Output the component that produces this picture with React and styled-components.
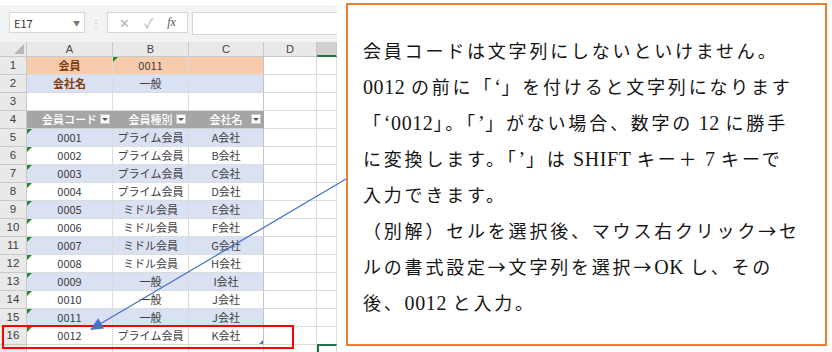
import React from 'react'
import styled, { createGlobalStyle, css } from 'styled-components'

const GlobalStyle = createGlobalStyle`
  html, body {
    margin: 0;
    padding: 0;
    background: #ffffff;
  }
  body {
    width: 832px;
    height: 352px;
    overflow: hidden;
  }
`

const Page = styled.div`
  position: relative;
  display: flex;
  align-items: flex-start;
  width: 832px;
  height: 352px;
  overflow: hidden;
  background: #fff;
`

const Sheet = styled.div`
  width: 337px;
  height: 352px;
  flex-shrink: 0;
  display: flex;
  flex-direction: column;
  overflow: hidden;
  font-family: "Noto Sans CJK JP", sans-serif;
  font-size: 11px;
  color: #3a3a3a;
`

const FormulaBar = styled.div`
  flex-shrink: 0;
  display: flex;
  align-items: flex-start;
  margin-top: 5px;
  height: 37px;
  padding-top: 7px;
  box-sizing: border-box;
  background: #f3f3f3;
`

const NameBox = styled.div`
  display: flex;
  align-items: center;
  justify-content: space-between;
  margin-left: 9px;
  width: 76px;
  height: 21px;
  box-sizing: border-box;
  padding: 0 4px 0 4px;
  background: #fff;
  border: 1px solid #d6d6d6;
  color: #333;
`

const Caret = styled.span`
  font-size: 7px;
  color: #777;
`

const Grip = styled.div`
  width: 22px;
  height: 21px;
  display: flex;
  align-items: center;
  justify-content: center;
  color: #b5b5b5;
  font-size: 10px;
`

const FuncBox = styled.div`
  display: flex;
  align-items: center;
  justify-content: space-around;
  width: 81px;
  height: 21px;
  box-sizing: border-box;
  padding: 0 4px;
  background: #fff;
  border: 1px solid #d6d6d6;
  color: #b0b0b0;
  font-size: 13px;
`

const Fx = styled.span`
  font-family: "Liberation Serif", serif;
  font-style: italic;
  font-size: 12px;
  color: #555;
`

const Input = styled.div`
  flex: 1;
  margin-left: 4px;
  height: 21px;
  background: #fff;
  border: 1px solid #d6d6d6;
  border-right: none;
`

const Grid = styled.div`
  flex-shrink: 0;
  display: grid;
  grid-template-columns: 27px 86px 76px 75px 53px 20px;
  grid-template-rows: 15px repeat(17, 18px);
`

const Cell = styled.div`
  position: relative;
  display: flex;
  align-items: center;
  justify-content: center;
  box-sizing: border-box;
  border-right: 1px solid ${p => p.$edge ? '#c4c4c4' : '#dcdcdc'};
  border-bottom: 1px solid #dcdcdc;
  background: ${p => p.$bg || '#fff'};
  color: ${p => p.$color || '#404040'};
  font-weight: ${p => p.$bold ? 700 : 400};
  white-space: nowrap;
  line-height: 1;

  ${p => p.$tri && css`
    &::before {
      content: "";
      position: absolute;
      left: 0;
      top: 0;
      border-top: 5px solid #1f8a2e;
      border-right: 5px solid transparent;
    }
  `}

  ${p => p.$handle && css`
    &::after {
      content: "";
      position: absolute;
      right: 0;
      bottom: 0;
      border-bottom: 4px solid #4472c4;
      border-left: 4px solid transparent;
    }
  `}
`

const HeadCell = styled.div`
  display: flex;
  align-items: center;
  justify-content: center;
  box-sizing: border-box;
  background: ${p => p.$active ? '#d2d2d2' : '#e9e9e9'};
  border-right: 1px solid #c9c9c9;
  border-bottom: ${p => p.$active ? '2px solid #217346' : '1px solid #c9c9c9'};
  color: #444;
  font-family: "Liberation Sans", sans-serif;
  font-size: 11px;
  line-height: 1;
`

const Corner = styled(HeadCell)`
  position: relative;
  &::after {
    content: "";
    position: absolute;
    right: 2px;
    bottom: 2px;
    border-bottom: 10px solid #b9b9b9;
    border-left: 10px solid transparent;
  }
`

const RowNum = styled(HeadCell)`
  font-size: 11.5px;
  color: #3d3d3d;
`

const TableHead = styled(Cell)`
  background: #a5a5a5;
  color: #fff;
  border-right-color: #a5a5a5;
  border-bottom-color: #d0d0d0;
  font-weight: 500;
`

const FilterButton = styled.span`
  position: absolute;
  right: 2px;
  top: 3px;
  width: 10px;
  height: 10px;
  box-sizing: border-box;
  background: #fff;
  border: 1px solid #c8c8c8;
  display: flex;
  align-items: center;
  justify-content: center;
  &::after {
    content: "";
    border-top: 3px solid #555;
    border-left: 3px solid transparent;
    border-right: 3px solid transparent;
  }
`

const Selected = styled(Cell)`
  border-top: 2px solid #217346;
  border-left: 2px solid #217346;
  margin-top: -1px;
`

const Callout = styled.div`
  flex-shrink: 0;
  margin: 3px 0 0 9px;
  width: 481px;
  height: 343px;
  box-sizing: border-box;
  border: 2px solid #ed7d31;
  padding: 27px 0 0 15px;
  background: #fff;
  font-family: "Noto Sans CJK JP", sans-serif;
  font-size: 18px;
  letter-spacing: 2.8px;
  color: #151515;
`

const Line = styled.div`
  height: 36px;
  line-height: 36px;
  white-space: pre;
  overflow: visible;
`

const Latin = styled.span`
  font-family: "Liberation Serif", serif;
  font-size: 20px;
  line-height: 1;
  letter-spacing: 0.6px;
`

const Overlay = styled.svg`
  position: absolute;
  left: 0;
  top: 0;
  pointer-events: none;
`

const BROWN = '#843c0c'
const BLUE = '#d9e1f2'
const PEACH = '#f8cbad'

const members = [
  ['0001', 'プライム会員', 'A会社'],
  ['0002', 'プライム会員', 'B会社'],
  ['0003', 'プライム会員', 'C会社'],
  ['0004', 'プライム会員', 'D会社'],
  ['0005', 'ミドル会員', 'E会社'],
  ['0006', 'ミドル会員', 'F会社'],
  ['0007', 'ミドル会員', 'G会社'],
  ['0008', 'ミドル会員', 'H会社'],
  ['0009', '一般', 'I会社'],
  ['0010', '一般', 'J会社'],
  ['0011', '一般', 'J会社'],
  ['0012', 'プライム会員', 'K会社'],
]

const Blank = () => (
  <>
    <Cell />
    <Cell />
  </>
)

const App = () => {
  return (
    <Page>
      <GlobalStyle />
      <Sheet>
        <FormulaBar>
          <NameBox>
            <span>E17</span>
            <Caret>▼</Caret>
          </NameBox>
          <Grip>⋮</Grip>
          <FuncBox>
            <span>✕</span>
            <span>✓</span>
            <Fx>fx</Fx>
          </FuncBox>
          <Input />
        </FormulaBar>

        <Grid>
          <Corner />
          <HeadCell>A</HeadCell>
          <HeadCell>B</HeadCell>
          <HeadCell>C</HeadCell>
          <HeadCell>D</HeadCell>
          <HeadCell $active />

          <RowNum>1</RowNum>
          <Cell $bg={PEACH} $bold $color={BROWN}>会員</Cell>
          <Cell $bg={PEACH} $tri>0011</Cell>
          <Cell $bg={PEACH} $edge />
          <Blank />

          <RowNum>2</RowNum>
          <Cell $bg={BLUE} $bold $color={BROWN}>会社名</Cell>
          <Cell $bg={BLUE}>一般</Cell>
          <Cell $bg={BLUE} $edge />
          <Blank />

          <RowNum>3</RowNum>
          <Cell />
          <Cell />
          <Cell $edge />
          <Blank />

          <RowNum>4</RowNum>
          <TableHead>会員コード<FilterButton /></TableHead>
          <TableHead>会員種別<FilterButton /></TableHead>
          <TableHead>会社名<FilterButton /></TableHead>
          <Blank />

          {members.map(([code, kind, company], i) => {
            const bg = i % 2 === 0 ? BLUE : '#fff'
            const last = i === members.length - 1
            return (
              <React.Fragment key={code}>
                <RowNum>{i + 5}</RowNum>
                <Cell $bg={bg} $tri>{code}</Cell>
                <Cell $bg={bg}>{kind}</Cell>
                <Cell $bg={bg} $edge $handle={last}>{company}</Cell>
                <Blank />
              </React.Fragment>
            )
          })}

          <RowNum />
          <Cell />
          <Cell />
          <Cell />
          <Cell />
          <Selected />
        </Grid>
      </Sheet>

      <Callout>
        <Line>会員コードは文字列にしないといけません。</Line>
        <Line><Latin>0012 </Latin>の前に「<Latin>‘</Latin>」を付けると文字列になります</Line>
        <Line>「<Latin>‘0012</Latin>」。「<Latin>’</Latin>」がない場合、数字の<Latin> 12 </Latin>に勝手</Line>
        <Line>に変換します。「<Latin>’</Latin>」は<Latin> SHIFT </Latin>キー＋<Latin> 7 </Latin>キーで</Line>
        <Line>入力できます。</Line>
        <Line>（別解）セルを選択後、マウス右クリック→セ</Line>
        <Line>ルの書式設定→文字列を選択→<Latin>OK </Latin>し、その</Line>
        <Line>後、<Latin>0012 </Latin>と入力。</Line>
      </Callout>

      <Overlay width="832" height="352" viewBox="0 0 832 352">
        <rect x="3" y="326" width="290" height="22" fill="none" stroke="#ff0000" strokeWidth="2" />
        <line x1="346" y1="179" x2="100" y2="324" stroke="#4472c4" strokeWidth="1.2" />
        <polygon points="90,330 104.2,328.6 98.2,318.2" fill="#4472c4" />
      </Overlay>
    </Page>
  )
}

export default App
